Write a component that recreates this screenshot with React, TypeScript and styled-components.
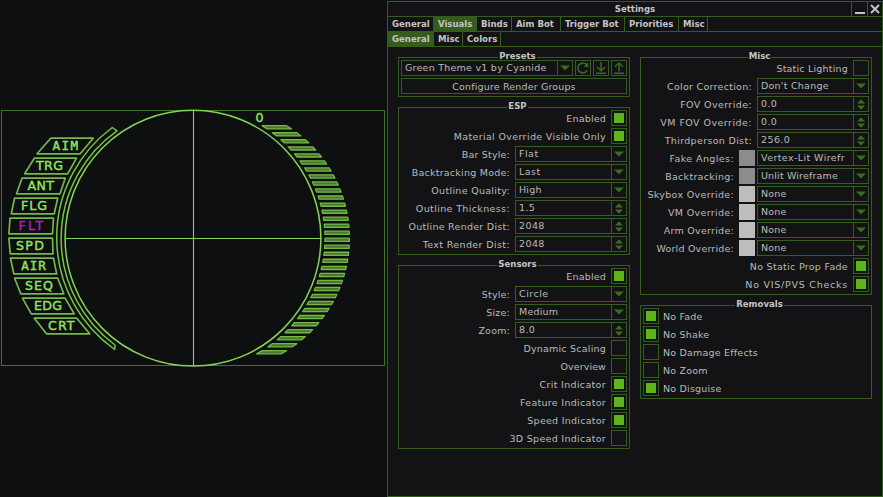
import React from "react";
import styled, { createGlobalStyle, css } from "styled-components";

const line = "#345c1d";
const panelBg = "#131315";
const glow = "#84d552";

const Global = createGlobalStyle`
  * { box-sizing: border-box; }
  html, body { margin: 0; background: #0e0f11; }
  body { font-family: "DejaVu Sans", Verdana, sans-serif; overflow: hidden; }
`;

const Screen = styled.div`
  display: flex;
  width: 883px;
  height: 497px;
  background: #0e0f11;
`;

const Radar = styled.svg`
  flex: none;
  display: block;
  width: 387px;
  height: 497px;
`;

const HudText = styled.text<{ $active?: boolean; $mono?: boolean }>`
  font-family: ${(p) => (p.$mono ? '"DejaVu Sans Mono"' : '"DejaVu Sans"')}, sans-serif;
  font-size: 12.6px;
  fill: ${(p) => (p.$active ? "#b01fb8" : "#94e35f")};
  stroke: ${(p) => (p.$active ? "#b01fb8" : "#94e35f")};
  stroke-width: 0.4px;
`;

const Window = styled.section`
  flex: none;
  display: flex;
  flex-direction: column;
  width: 496px;
  height: 496px;
  margin-top: 1px;
  border: 1px solid ${line};
  background: ${panelBg};
  color: #b9bbb9;
  font-size: 9.5px;
  letter-spacing: 0.16px;
`;

const boldText = css`
  font-family: "DejaVu Sans Condensed", "DejaVu Sans", sans-serif;
  font-stretch: condensed;
  font-weight: bold;
  font-size: 9.5px;
  letter-spacing: 0;
  color: #c3c5c3;
`;

const TitleBar = styled.header`
  ${boldText}
  display: grid;
  grid-template-columns: 31px 1fr 16px 15px;
  height: 15px;
  line-height: 14px;
  border-bottom: 1px solid ${line};
  text-align: center;
`;

const WindowButton = styled.button`
  display: flex;
  align-items: center;
  justify-content: center;
  padding: 0;
  border: 0;
  border-left: 1px solid ${line};
  background: none;
`;

const TabBar = styled.nav`
  display: flex;
  height: 15px;
  border-bottom: 1px solid ${line};
`;

const Tab = styled.div<{ $width: number; $active?: boolean }>`
  ${boldText}
  flex: none;
  width: ${(p) => p.$width}px;
  height: 14px;
  padding-left: 4px;
  line-height: 13px;
  white-space: nowrap;
  border-right: 1px solid ${line};
  background: ${(p) => (p.$active ? line : "transparent")};
`;

const Columns = styled.main`
  display: flex;
  justify-content: space-between;
  padding: 10px 10px 0;
`;

const Column = styled.div`
  display: flex;
  flex-direction: column;
  gap: 10px;
  width: 232px;
`;

const GroupBox = styled.section`
  display: flex;
  flex-direction: column;
  gap: 2px;
  padding: 2px;
  border: 1px solid ${line};
`;

const GroupTitle = styled.h2`
  ${boldText}
  align-self: center;
  height: 12px;
  margin: -11px 0 -3px 7px;
  padding: 0 1px;
  line-height: 13px;
  background: ${panelBg};
`;

const Row = styled.div<{ $start?: boolean }>`
  display: flex;
  align-items: center;
  justify-content: ${(p) => (p.$start ? "flex-start" : "flex-end")};
  gap: 2px;
  height: 16px;
`;

const Label = styled.label<{ $side?: "left" | "right"; $track?: number }>`
  margin: ${(p) => (p.$side === "right" ? "0 0 0 2px" : "0 3px 0 0")};
  line-height: 15px;
  letter-spacing: ${(p) => p.$track ?? 0.2}px;
  white-space: nowrap;
`;

const Field = styled.div<{ $width: number; $track?: number }>`
  display: flex;
  flex: none;
  justify-content: space-between;
  width: ${(p) => p.$width}px;
  height: 16px;
  padding-left: 3px;
  line-height: 13px;
  letter-spacing: ${(p) => p.$track ?? 0.2}px;
  white-space: nowrap;
  border: 1px solid ${line};
`;

const FieldButton = styled.span`
  display: flex;
  align-items: center;
  justify-content: center;
  width: 15px;
  border-left: 1px solid ${line};
`;

const CheckBox = styled.span<{ $on?: boolean }>`
  flex: none;
  width: 16px;
  height: 16px;
  padding: 2px;
  border: 1px solid ${line};
  background: ${(p) => (p.$on ? "#5fb41c content-box" : "none")};
  box-shadow: ${(p) => (p.$on ? "inset 0 0 0 2px #0d1a0b" : "none")};
`;

const Swatch = styled.span<{ $color: string }>`
  flex: none;
  width: 16px;
  height: 16px;
  background: ${(p) => p.$color};
`;

const WideButton = styled.button`
  width: 226px;
  height: 16px;
  padding: 0;
  border: 1px solid ${line};
  background: none;
  color: inherit;
  font: inherit;
  letter-spacing: inherit;
  line-height: 13px;
`;

const IconButton = styled.button`
  display: flex;
  flex: none;
  align-items: center;
  justify-content: center;
  width: 16px;
  height: 16px;
  padding: 0;
  border: 1px solid ${line};
  background: none;
`;

const arrowColor = "#3a6c20";

const Down = () => (
  <svg width="10" height="6" viewBox="0 0 10 6">
    <path d="M0 0.5H10L5 5.5Z" fill={arrowColor} />
  </svg>
);

const Spin = () => (
  <svg width="8" height="11" viewBox="0 0 8 11">
    <path d="M0 4.5H8L4 0.2ZM0 6.5H8L4 10.8Z" fill={arrowColor} />
  </svg>
);

function Select({ value, width = 112, track }: { value: string; width?: number; track?: number }) {
  return (
    <Field $width={width} $track={track}>
      {value}
      <FieldButton><Down /></FieldButton>
    </Field>
  );
}

function Stepper({ value }: { value: string }) {
  return (
    <Field $width={112} $track={0.4}>
      {value}
      <FieldButton><Spin /></FieldButton>
    </Field>
  );
}

type Item = {
  label: string;
  track?: number;
  on?: boolean;
  select?: string;
  selectTrack?: number;
  number?: string;
  swatch?: string;
};

function Setting({ item }: { item: Item }) {
  return (
    <Row>
      <Label $track={item.track}>{item.label}</Label>
      {item.swatch && <Swatch $color={item.swatch} />}
      {item.select && <Select value={item.select} track={item.selectTrack} />}
      {item.number && <Stepper value={item.number} />}
      {item.on !== undefined && <CheckBox $on={item.on} />}
    </Row>
  );
}

function Group({ title, children }: { title: string; children: React.ReactNode }) {
  return (
    <GroupBox>
      <GroupTitle>{title}</GroupTitle>
      {children}
    </GroupBox>
  );
}

const tabs: [string, number][] = [
  ["General", 46], ["Visuals", 43], ["Binds", 35], ["Aim Bot", 49],
  ["Trigger Bot", 64], ["Priorities", 54], ["Misc", 29],
];
const subTabs: [string, number][] = [["General", 46], ["Misc", 29], ["Colors", 38]];

const esp: Item[] = [
  { label: "Enabled", on: true },
  { label: "Material Override Visible Only", track: 0.36, on: true },
  { label: "Bar Style:", select: "Flat", selectTrack: 0.5 },
  { label: "Backtracking Mode:", track: 0.24, select: "Last", selectTrack: 0.5 },
  { label: "Outline Quality:", track: 0.3, select: "High", selectTrack: 0.2 },
  { label: "Outline Thickness:", track: 0.37, number: "1.5" },
  { label: "Outline Render Dist:", track: 0.27, number: "2048" },
  { label: "Text Render Dist:", track: 0.38, number: "2048" },
];

const sensors: Item[] = [
  { label: "Enabled", on: true },
  { label: "Style:", select: "Circle", selectTrack: 0.5 },
  { label: "Size:", select: "Medium", selectTrack: 0.2 },
  { label: "Zoom:", number: "8.0" },
  { label: "Dynamic Scaling", track: 0.22, on: false },
  { label: "Overview", track: 0.1, on: false },
  { label: "Crit Indicator", track: 0.33, on: true },
  { label: "Feature Indicator", track: 0.3, on: true },
  { label: "Speed Indicator", track: 0.26, on: true },
  { label: "3D Speed Indicator", track: 0.3, on: false },
];

const misc: Item[] = [
  { label: "Static Lighting", on: false },
  { label: "Color Correction:", track: 0.28, select: "Don't Change", selectTrack: 0.24 },
  { label: "FOV Override:", track: 0.4, number: "0.0" },
  { label: "VM FOV Override:", track: 0.46, number: "0.0" },
  { label: "Thirdperson Dist:", track: 0.33, number: "256.0" },
  { label: "Fake Angles:", track: 0.4, swatch: "#8b8c8b", select: "Vertex-Lit Wirefr", selectTrack: 0.4 },
  { label: "Backtracking:", track: 0.28, swatch: "#8b8c8b", select: "Unlit Wireframe", selectTrack: 0.16 },
  { label: "Skybox Override:", track: 0.33, swatch: "#bcbebc", select: "None" },
  { label: "VM Override:", track: 0.33, swatch: "#bcbebc", select: "None" },
  { label: "Arm Override:", track: 0.27, swatch: "#bcbebc", select: "None" },
  { label: "World Override:", swatch: "#bcbebc", select: "None" },
  { label: "No Static Prop Fade", track: 0.3, on: true },
  { label: "No VIS/PVS Checks", track: 0.75, on: true },
];

const removals: [string, boolean][] = [
  ["No Fade", true], ["No Shake", true], ["No Damage Effects", false],
  ["No Zoom", false], ["No Disguise", true],
];

// name, top-left, top-right, bottom-right, bottom-left x, text start, text width
const indicators: [string, number, number, number, number, number, number][] = [
  ["AIM", 50.7, 93.2, 80.3, 37, 52.6, 25.4],
  ["TRG", 34.3, 76.5, 67.7, 24.7, 36, 27],
  ["ANT", 22, 65.2, 60, 16.5, 27.5, 26.5],
  ["FLG", 14.6, 57.7, 54.2, 11.3, 21, 26],
  ["FLT", 10, 53.5, 52.5, 8.9, 18.6, 24.5],
  ["SPD", 8.9, 52.5, 53, 10.2, 16, 28],
  ["AIR", 10.5, 53.5, 56.7, 13.8, 21.3, 24.5],
  ["SEQ", 14.6, 57.7, 63.8, 20.8, 25, 28],
  ["EDG", 22.5, 65.2, 74.2, 31.3, 34, 28],
  ["CRT", 34.3, 76.8, 89.7, 46.5, 48, 26.5],
];

const CX = 193;
const CY = 238.2;
const edge = (y: number) => CX + Math.sqrt(132 * 132 - (y - CY) * (y - CY));

function Hud() {
  return (
    <Radar viewBox="0 0 387 497">
      <rect x="1.5" y="110.5" width="383" height="255" fill="none" stroke="#3f7527" />
      <path d="M193.5 110V366M65 238.5H321" stroke={glow} strokeWidth="1.1" />
      <circle cx={CX} cy={CY} r="127.9" fill="none" stroke={glow} strokeWidth="1.5" />
      <path
        d="M117 130.8A132 132 0 0 0 115 345L114.7 349.5A136.9 136.9 0 0 1 112.3 127.5Z"
        fill="none" stroke="#74c445" strokeWidth="1.5" strokeLinejoin="round"
      />
      {indicators.map(([name, tl, tr, br, bl, x, w], i) => {
        const y = 138 + i * 20;
        return (
          <g key={name}>
            <polygon
              points={`${tl},${y + 0.2} ${tr},${y + 0.2} ${br},${y + 15.8} ${bl},${y + 15.8}`}
              fill="none" stroke="#74b84c" strokeWidth="1.7" strokeLinejoin="round"
            />
            <HudText x={x} y={y + 12} textLength={w} $mono={name.includes("I")} $active={name === "FLT"}>
              {name}
            </HudText>
          </g>
        );
      })}
      {Array.from({ length: 33 }, (_, i) => {
        const y = 127.3 + i * 7.03;
        const a = edge(y - 1.6);
        const b = edge(y + 1.6);
        return (
          <polygon
            key={i}
            points={`${a},${y - 1.6} ${a + 24.4},${y - 1.6} ${b + 24.4},${y + 1.6} ${b},${y + 1.6}`}
            fill="#4a7532" stroke="#70ba40" strokeWidth="1.3" strokeLinejoin="round"
          />
        );
      })}
      <HudText x="255.5" y="122.3">0</HudText>
    </Radar>
  );
}

export default function App() {
  return (
    <Screen>
      <Global />
      <Hud />
      <Window>
        <TitleBar>
          <span />
          <span>Settings</span>
          <WindowButton aria-label="Minimize">
            <svg width="10" height="12" viewBox="0 0 10 12"><path d="M0 10H10" stroke="#c3c5c3" strokeWidth="2" /></svg>
          </WindowButton>
          <WindowButton aria-label="Close">
            <svg width="10" height="10" viewBox="0 0 10 10"><path d="M1 1L9 9M9 1L1 9" stroke="#c3c5c3" strokeWidth="2" /></svg>
          </WindowButton>
        </TitleBar>
        <TabBar>
          {tabs.map(([name, w]) => <Tab key={name} $width={w} $active={name === "Visuals"}>{name}</Tab>)}
        </TabBar>
        <TabBar>
          {subTabs.map(([name, w]) => <Tab key={name} $width={w} $active={name === "General"}>{name}</Tab>)}
        </TabBar>
        <Columns>
          <Column>
            <Group title="Presets">
              <Row>
                <Select value="Green Theme v1 by Cyanide" width={172} track={0.24} />
                <IconButton aria-label="Reload">
                  <svg width="14" height="14" viewBox="0 0 14 14" fill="none" stroke={arrowColor} strokeWidth="1.6">
                    <path d="M11.3 9.4A5 5 0 1 1 10.5 3.4" />
                    <path d="M12.2 1.2V6H7.6Z" fill={arrowColor} stroke="none" />
                  </svg>
                </IconButton>
                <IconButton aria-label="Load">
                  <svg width="14" height="14" viewBox="0 0 14 14" fill="none" stroke={arrowColor} strokeWidth="1.5">
                    <path d="M7 1V9.5M3 6L7 9.8L11 6M2 12.2H12" />
                  </svg>
                </IconButton>
                <IconButton aria-label="Save">
                  <svg width="14" height="14" viewBox="0 0 14 14" fill="none" stroke={arrowColor} strokeWidth="1.5">
                    <path d="M7 10.5V2M3 5.8L7 2L11 5.8M2 12.2H12" />
                  </svg>
                </IconButton>
              </Row>
              <WideButton>Configure Render Groups</WideButton>
            </Group>
            <Group title="ESP">{esp.map((it) => <Setting key={it.label} item={it} />)}</Group>
            <Group title="Sensors">{sensors.map((it) => <Setting key={it.label} item={it} />)}</Group>
          </Column>
          <Column>
            <Group title="Misc">{misc.map((it) => <Setting key={it.label} item={it} />)}</Group>
            <Group title="Removals">
              {removals.map(([name, on]) => (
                <Row key={name} $start>
                  <CheckBox $on={on} />
                  <Label $side="right">{name}</Label>
                </Row>
              ))}
            </Group>
          </Column>
        </Columns>
      </Window>
    </Screen>
  );
}
